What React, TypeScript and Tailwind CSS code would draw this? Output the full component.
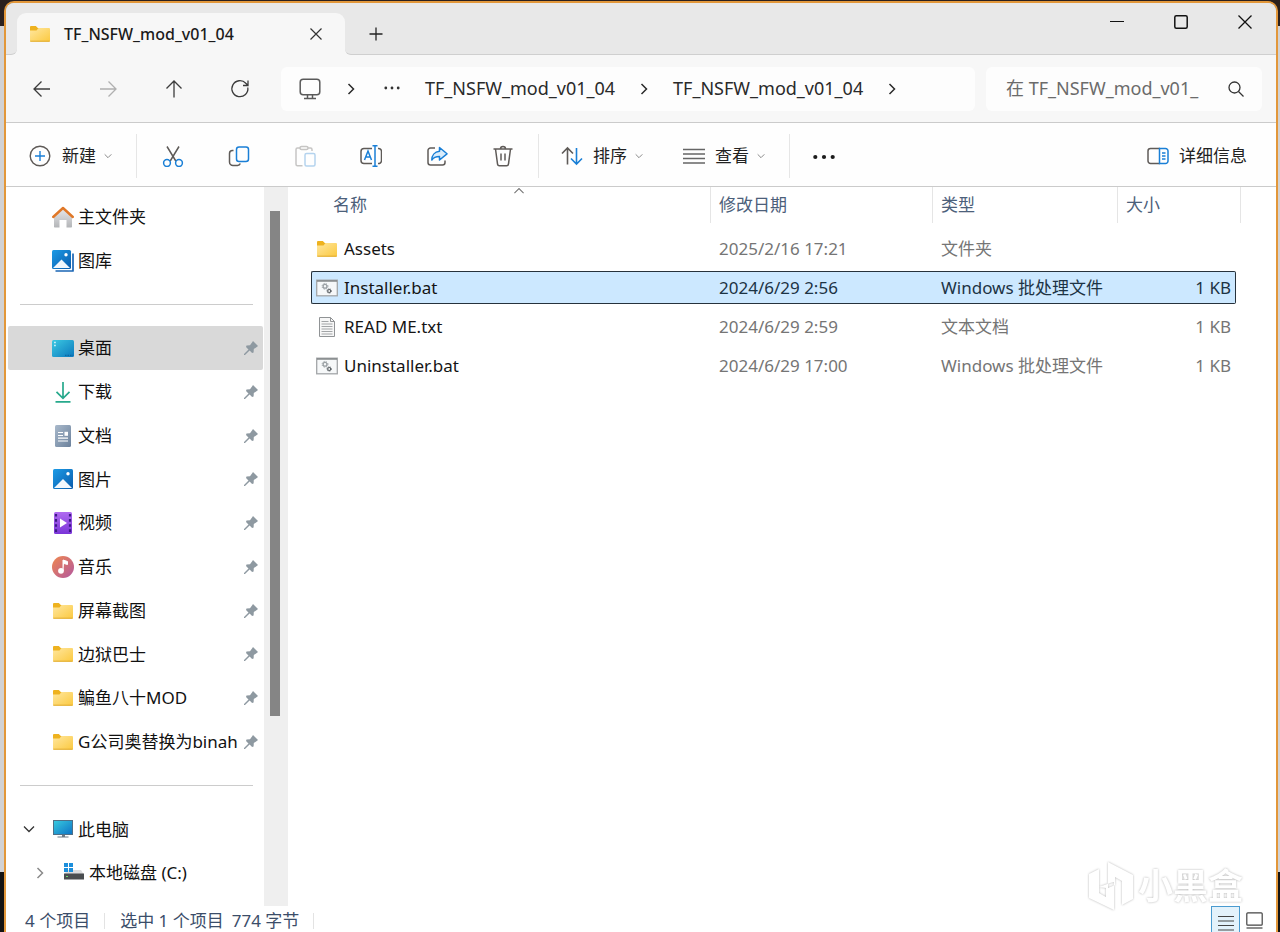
import type { ReactNode } from 'react';
import clsx from 'clsx';

interface IconProps {
  className?: string;
}

interface Place {
  name: string;
  icon: ReactNode;
  pinned?: boolean;
  selected?: boolean;
}

interface FileEntry {
  name: string;
  icon: ReactNode;
  modified: string;
  type: string;
  size: string;
  selected?: boolean;
}

function Chevron({ className = '' }: IconProps) {
  return (
    <svg viewBox="0 0 12 12" fill="none" stroke="currentColor" className={className}>
      <path d="M3.5 1 8.5 6l-5 5" strokeWidth="1.5" />
    </svg>
  );
}

function ChevronDown({ className = '' }: IconProps) {
  return (
    <svg viewBox="0 0 12 12" fill="none" stroke="currentColor" className={className}>
      <path d="m1 3.5 5 5 5-5" strokeWidth="1.3" />
    </svg>
  );
}

function FolderIcon() {
  return (
    <svg width="22" height="22" viewBox="0 0 22 22">
      <defs>
        <linearGradient id="folder" x1="0" y1="0" x2="1" y2="1">
          <stop offset="0" stopColor="#ffe7a0" />
          <stop offset="1" stopColor="#fbc93f" />
        </linearGradient>
      </defs>
      <path d="M1 4.2C1 3.500 1.500 3 2.200 3h4.600l2 2H20v4H1z" fill="#eeb21f" />
      <path d="M1 7.500h6.500l2-2.500h10.300c.700 0 1.200.5 1.200 1.200v11.600c0 .5-.4.900-.9.900H1.900c-.5 0-.9-.4-.9-.9z" fill="url(#folder)" />
      <path d="M1.300 18.200h19.400" stroke="#e0ab30" strokeWidth="1" />
    </svg>
  );
}

function HomeIcon() {
  return (
    <svg width="22" height="22" viewBox="0 0 22 22">
      <defs>
        <linearGradient id="wall" x1="0" y1="0" x2="0" y2="1">
          <stop offset="0" stopColor="#e8e8ea" />
          <stop offset="1" stopColor="#b3b5b8" />
        </linearGradient>
      </defs>
      <path d="M2 10 11 2.500 20 10v10.500c0 .6-.4 1-1 1h-4.500V14h-7v7.500H3c-.6 0-1-.4-1-1z" fill="url(#wall)" />
      <path d="M1.200 11 11 2l9.800 9" fill="none" stroke="#e07828" strokeWidth="2.400" strokeLinecap="round" strokeLinejoin="round" />
    </svg>
  );
}

function PictureShape({ size }: { size: number }) {
  return (
    <>
      <defs>
        <linearGradient id="pic" x1="0" y1="0" x2="1" y2="1">
          <stop offset="0" stopColor="#1c9be6" />
          <stop offset="1" stopColor="#0a5cad" />
        </linearGradient>
      </defs>
      <rect width={size} height={size} rx="1.500" fill="url(#pic)" />
      <path d={`M1 ${size - 1} L${size / 2} ${size / 2} L${size - 1} ${size - 1}Z`} fill="#f2f8fd" />
      <circle cx={size - 5} cy="4.800" r="1.700" fill="#fff" />
    </>
  );
}

function GalleryIcon() {
  return (
    <svg width="22" height="22" viewBox="0 0 22 22">
      <path d="M21 3.500v17.500H3.500" fill="none" stroke="#1a66b5" strokeWidth="1.700" strokeLinejoin="round" />
      <PictureShape size={19} />
    </svg>
  );
}

function PicturesIcon() {
  return (
    <svg width="22" height="22" viewBox="-1 -1 22 22">
      <PictureShape size={20} />
    </svg>
  );
}

function DesktopIcon() {
  return (
    <svg width="22" height="22" viewBox="0 0 22 22">
      <defs>
        <linearGradient id="desk" x1="0" y1="0" x2="1" y2="1">
          <stop offset="0" stopColor="#3cc9e2" />
          <stop offset="1" stopColor="#0b78bd" />
        </linearGradient>
      </defs>
      <rect y="3" width="22" height="17" rx="1.500" fill="url(#desk)" />
      <path d="M2.200 5.500h1.500M2.200 8.500h1.500" stroke="#e6fbff" strokeWidth="1.400" />
      <path d="M13 18.300h8" stroke="#0a5f9b" strokeWidth="1" strokeDasharray="1.500 1" />
    </svg>
  );
}

function DownloadIcon() {
  return (
    <svg width="22" height="22" viewBox="0 0 22 22" fill="none" stroke="#27a98c" strokeWidth="1.700">
      <path d="M11 1v16M4.500 10.800 11 17.300l6.500-6.500M3.500 20.800h15" />
    </svg>
  );
}

function DocumentsIcon() {
  return (
    <svg width="22" height="22" viewBox="0 0 22 22">
      <defs>
        <linearGradient id="docs" x1="0" y1="0" x2="1" y2="1">
          <stop offset="0" stopColor="#a9b9cb" />
          <stop offset="1" stopColor="#6b819c" />
        </linearGradient>
      </defs>
      <rect x="3" width="16" height="22" rx="1.500" fill="url(#docs)" />
      <path d="M6 7.500h5M6 10.500h5M6 13.200h10M6 16h10" stroke="#fff" strokeWidth="1.200" />
      <rect x="12.500" y="6.800" width="3.500" height="4" fill="#fff" />
    </svg>
  );
}

function VideosIcon() {
  return (
    <svg width="22" height="22" viewBox="0 0 22 22">
      <defs>
        <linearGradient id="video" x1="0" y1="0" x2="0" y2="1">
          <stop offset="0" stopColor="#b06af0" />
          <stop offset="1" stopColor="#7a35d8" />
        </linearGradient>
      </defs>
      <rect x="2" width="18" height="22" rx="1.500" fill="url(#video)" />
      <path d="M4 2v18M18 2v18" stroke="#3d1a86" strokeWidth="2.200" strokeDasharray="2.600 2.500" />
      <path d="m8 6.500 7 4.500-7 4.500z" fill="#fff" />
    </svg>
  );
}

function MusicIcon() {
  return (
    <svg width="22" height="22" viewBox="0 0 22 22">
      <defs>
        <linearGradient id="music" x1="0" y1="0" x2="1" y2="1">
          <stop offset="0" stopColor="#f0884e" />
          <stop offset="1" stopColor="#b257a0" />
        </linearGradient>
      </defs>
      <circle cx="11" cy="11" r="11" fill="url(#music)" />
      <circle cx="9" cy="14.800" r="2.900" fill="#fff" />
      <path d="M11 15V4l4.500 1.500v3L12 7.500" fill="#fff" stroke="#fff" strokeWidth="1" />
    </svg>
  );
}

function PcIcon() {
  return (
    <svg width="22" height="22" viewBox="0 0 22 22">
      <defs>
        <linearGradient id="pc" x1="0" y1="0" x2="1" y2="1">
          <stop offset="0" stopColor="#38cbe0" />
          <stop offset="1" stopColor="#0d72c4" />
        </linearGradient>
      </defs>
      <rect x="1.500" y="2.500" width="19" height="14" fill="url(#pc)" stroke="#4f6f86" strokeWidth="1" />
      <path d="M10 17h3v1.500h3.500v1h-11v-1H10z" fill="#6c7a85" />
    </svg>
  );
}

function DriveIcon() {
  return (
    <svg width="22" height="22" viewBox="0 0 22 22">
      <path d="M1.500 12 4 8h14l2.500 4z" fill="#dcdddf" />
      <rect x="1" y="11.500" width="20" height="6" fill="#4a4d50" />
      <path d="M3 14.500h2" stroke="#6fd66f" strokeWidth="1.200" />
      <path d="M1 1h4v4H1zM6 1h4v4H6zM1 6h4v4H1zM6 6h4v4H6z" fill="#1c8fdc" />
    </svg>
  );
}

function BatIcon() {
  return (
    <svg width="22" height="22" viewBox="0 0 22 22" fill="none">
      <rect x=".7" y="3.200" width="20.600" height="15.600" fill="#f6f8f9" stroke="#a3a6a8" strokeWidth="1.300" />
      <path d="M1 4h20" stroke="#7d8183" strokeWidth="1.400" />
      <circle cx="9" cy="9.300" r="1.900" stroke="#9aa0a4" strokeWidth="1.300" />
      <circle cx="9" cy="9.300" r="2.900" stroke="#9aa0a4" strokeWidth="1" strokeDasharray="1.200 1.150" />
      <circle cx="13.200" cy="14" r="1.500" stroke="#5a6064" strokeWidth="1.200" />
      <circle cx="13.200" cy="14" r="2.300" stroke="#5a6064" strokeWidth=".8" strokeDasharray="1 1.050" />
    </svg>
  );
}

function TxtIcon() {
  return (
    <svg width="22" height="22" viewBox="0 0 22 22" fill="none" stroke="#909395">
      <path d="M3.500 1.500h11l4 4v15h-15z" fill="#f7f7f7" />
      <path d="M14.500 1.500v4h4" />
      <path d="M5.500 5.500h7M5.500 8h11M5.500 10.500h11M5.500 13h11M5.500 15.500h11M5.500 18h11" stroke="#a2a5a7" />
    </svg>
  );
}

function PinIcon() {
  return (
    <svg width="14" height="14" viewBox="0 0 14 14" fill="#8e99a1" className="shrink-0">
      <path d="M9 0 14 5l-1.200.900-3 2.200-.2 3.300-1.500.6-2.500-2.500L1 14H0v-1l4.500-4.500L2 6l.5-1.500 3.500-.2L8.200 1.200z" />
    </svg>
  );
}

const navButtons = [
  { label: '后退', path: 'M18 10H2.500M9.500 2.500 2 10l7.500 7.500' },
  { label: '前进', path: 'M2 10h15.500M10.500 2.500 18 10l-7.500 7.500', disabled: true },
  { label: '向上', path: 'M10 18.500V2.500M2.500 9.500 10 2l7.500 7.500' },
  { label: '刷新', path: 'M17.800 8.500a8 8 0 1 1-2-4.200l2 2M18 1.500v5h-5' },
];

const INK = '#5f5b58';
const BLUE = '#1a7fd6';

const tools = [
  {
    label: '剪切',
    icon: (
      <>
        <path d="M5 1.500 13.800 16M17 1.500 8.200 16" stroke={INK} />
        <circle cx="5" cy="18" r="3.400" stroke={BLUE} />
        <circle cx="17" cy="18" r="3.400" stroke={BLUE} />
      </>
    ),
  },
  {
    label: '复制',
    icon: (
      <>
        <path d="M5.500 5.500h-1a3 3 0 0 0-3 3V17a3.500 3.500 0 0 0 3.500 3.500h4.500a3 3 0 0 0 2.800-2" stroke={INK} />
        <rect x="8.500" y="2" width="12" height="14.500" rx="2.500" stroke={BLUE} />
      </>
    ),
  },
  {
    label: '粘贴',
    icon: (
      <>
        <path d="M8.500 20.800H3.500a1.500 1.500 0 0 1-1.500-1.500V4.500A1.500 1.500 0 0 1 3.500 3H6M14 3h2.500A1.500 1.500 0 0 1 18 4.500V6" stroke="#c6c5c4" />
        <rect x="6" y="1.500" width="8" height="3" rx="1.500" stroke="#c6c5c4" />
        <rect x="11" y="8.500" width="10" height="12.500" rx="1.500" stroke="#b4d3ee" />
      </>
    ),
  },
  {
    label: '重命名',
    icon: (
      <>
        <path d="M12 3.500H4A3 3 0 0 0 1 6.500v9a3 3 0 0 0 3 3h8M18 3.500a3 3 0 0 1 3.500 3v9a3 3 0 0 1-3.500 3" stroke={INK} />
        <path d="m4.500 15 3.500-9 3.500 9M5.800 12h4.400M12.500.8h5M12.500 21.200h5M15 .8v20.400" stroke={BLUE} />
      </>
    ),
  },
  {
    label: '共享',
    icon: (
      <>
        <path d="M9 3H4.500A2.500 2.500 0 0 0 2 5.500v12A2.500 2.500 0 0 0 4.500 20h12a2.500 2.500 0 0 0 2.500-2.500V15.500" stroke={INK} />
        <path d="M13.500 2.500 21 8.800l-7.500 6.200v-3.500c-3.500 0-6 .8-7.700 3.500 0-4.500 2.700-8.200 7.700-8.700z" stroke={BLUE} fill="#d9ecfb" strokeLinejoin="round" />
      </>
    ),
  },
  {
    label: '删除',
    icon: (
      <path d="M1.500 4h19M3.500 4l2 14.800A2 2 0 0 0 7.500 20.700h7a2 2 0 0 0 2-1.900L18.500 4M8.500 4a2.500 2.500 0 0 1 5 0M9 8.500v7M13 8.500v7" stroke={INK} />
    ),
  },
];

const places: (Place | null)[] = [
  { name: '主文件夹', icon: <HomeIcon /> },
  { name: '图库', icon: <GalleryIcon /> },
  null,
  { name: '桌面', icon: <DesktopIcon />, pinned: true, selected: true },
  { name: '下载', icon: <DownloadIcon />, pinned: true },
  { name: '文档', icon: <DocumentsIcon />, pinned: true },
  { name: '图片', icon: <PicturesIcon />, pinned: true },
  { name: '视频', icon: <VideosIcon />, pinned: true },
  { name: '音乐', icon: <MusicIcon />, pinned: true },
  { name: '屏幕截图', icon: <FolderIcon />, pinned: true },
  { name: '边狱巴士', icon: <FolderIcon />, pinned: true },
  { name: '鳊鱼八十MOD', icon: <FolderIcon />, pinned: true },
  { name: 'G公司奥替换为binah', icon: <FolderIcon />, pinned: true },
  null,
];

const files: FileEntry[] = [
  { name: 'Assets', icon: <FolderIcon />, modified: '2025/2/16 17:21', type: '文件夹', size: '' },
  { name: 'Installer.bat', icon: <BatIcon />, modified: '2024/6/29 2:56', type: 'Windows 批处理文件', size: '1 KB', selected: true },
  { name: 'READ ME.txt', icon: <TxtIcon />, modified: '2024/6/29 2:59', type: '文本文档', size: '1 KB' },
  { name: 'Uninstaller.bat', icon: <BatIcon />, modified: '2024/6/29 17:00', type: 'Windows 批处理文件', size: '1 KB' },
];

function TitleBar() {
  return (
    <header className="flex h-[52px] shrink-0 bg-[linear-gradient(#e8e8e8_44px,#f7f7f7_44px)]">
      <div className="w-[11px] rounded-br-md border-b border-[#cfcfcf] bg-[#e8e8e8]" />
      <div className="flex w-[328px] bg-[linear-gradient(#e8e8e8_44px,#f7f7f7_44px)] pt-[10px]">
        <div className="flex flex-1 items-center rounded-t-[9px] bg-[#f7f7f7] pr-[22px] pl-[12px]">
          <FolderIcon />
          <span className="ml-[13px] flex-1 text-[16px] font-medium whitespace-nowrap text-[#1b1b1b]">TF_NSFW_mod_v01_04</span>
          <button aria-label="关闭标签页">
            <svg width="14" height="14" viewBox="0 0 14 14" fill="none" stroke="#333" strokeWidth="1.200">
              <path d="m1.500 1.500 11 11m0-11-11 11" />
            </svg>
          </button>
        </div>
      </div>
      <div className="flex flex-1 justify-between rounded-bl-md border-b border-[#cfcfcf] bg-[#e8e8e8] pr-6 pl-6">
        <button aria-label="新建标签页" className="pt-[10px]">
          <svg width="14" height="14" viewBox="0 0 14 14" fill="none" stroke="#222" strokeWidth="1.300">
            <path d="M7 .5v13M.5 7h13" />
          </svg>
        </button>
        <div className="flex h-[37px] items-center gap-[50px]">
          <button aria-label="最小化">
            <svg width="14" height="14" viewBox="0 0 14 14" fill="none" stroke="#111">
              <path d="M0 6.500h14" strokeWidth="1.200" />
            </svg>
          </button>
          <button aria-label="最大化">
            <svg width="14" height="14" viewBox="0 0 14 14" fill="none" stroke="#111">
              <rect x=".8" y=".8" width="12.400" height="12.400" rx="1.500" strokeWidth="1.500" />
            </svg>
          </button>
          <button aria-label="关闭">
            <svg width="14" height="14" viewBox="0 0 14 14" fill="none" stroke="#111">
              <path d="m.5.5 13 13m0-13-13 13" strokeWidth="1.300" />
            </svg>
          </button>
        </div>
      </div>
    </header>
  );
}

function AddressRow() {
  return (
    <div className="flex h-[68px] shrink-0 items-center border-b border-[#cbcbcb] bg-[#f7f7f7] pr-[14px] pl-[26px]">
      <nav className="flex w-[249px] gap-[46px]">
        {navButtons.map(({ label, path, disabled }) => (
          <button key={label} aria-label={label} disabled={disabled} className="text-[#3c3c3c] disabled:text-[#b0b0b0]">
            <svg width="20" height="20" viewBox="0 0 20 20" fill="none" stroke="currentColor" strokeWidth="1.300">
              <path d={path} />
            </svg>
          </button>
        ))}
      </nav>
      <div className="flex h-11 flex-1 items-center rounded-md bg-[#fdfdfd] pl-[18px] text-[18px] text-[#2a2a2a]">
        <svg width="22" height="22" viewBox="0 0 22 22" fill="none" stroke="#5a5a5a" strokeWidth="1.500">
          <rect x="1.200" y="1.200" width="19.600" height="15.600" rx="3" />
          <path d="M8.500 17v3.500M13.500 17v3.500M5 20.600h12" />
        </svg>
        <Chevron className="ml-6 size-3" />
        <svg width="16" height="16" viewBox="0 0 16 16" fill="#333" className="ml-[27px]">
          <circle cx="1.800" cy="7" r="1.400" />
          <circle cx="8" cy="7" r="1.400" />
          <circle cx="14.200" cy="7" r="1.400" />
        </svg>
        <a href="#parent" className="ml-[25px]">TF_NSFW_mod_v01_04</a>
        <Chevron className="mx-[23px] size-3" />
        <a href="#current">TF_NSFW_mod_v01_04</a>
        <Chevron className="ml-[23px] size-3" />
      </div>
      <label className="ml-[11px] flex h-11 w-[276px] items-center rounded-md bg-[#fdfdfd] pr-[17px] pl-5">
        <input
          type="text"
          aria-label="搜索"
          placeholder="在 TF_NSFW_mod_v01_"
          className="w-[200px] min-w-0 bg-transparent text-[18px] outline-none placeholder:text-[#6b6b6b]"
        />
        <svg width="18" height="18" viewBox="0 0 18 18" fill="none" stroke="#333" strokeWidth="1.300" className="ml-auto">
          <circle cx="7.500" cy="7.500" r="5.500" />
          <path d="m11.500 11.500 5 5" />
        </svg>
      </label>
    </div>
  );
}

function Toolbar() {
  return (
    <div className="flex h-16 shrink-0 items-center border-b border-[#cbcbcb] bg-[#fefefe] pt-[2px] pr-[29px] pl-[23px] text-[17px] text-[#222]">
      <button className="flex items-center">
        <svg width="22" height="22" viewBox="0 0 22 22" fill="none" strokeWidth="1.400">
          <circle cx="11" cy="11" r="9.800" stroke={INK} />
          <path d="M11 6v10M6 11h10" stroke={BLUE} />
        </svg>
        <span className="ml-[11px]">新建</span>
        <ChevronDown className="ml-2 size-2 text-[#777]" />
      </button>
      <div className="ml-6 h-11 w-px bg-[#e6e6e6]" />
      <div className="ml-[25px] flex gap-11">
        {tools.map(({ label, icon }) => (
          <button key={label} aria-label={label}>
            <svg width="22" height="22" viewBox="0 0 22 22" fill="none" strokeWidth="1.500">
              {icon}
            </svg>
          </button>
        ))}
      </div>
      <div className="ml-6 h-11 w-px bg-[#e6e6e6]" />
      <button className="ml-[22px] flex items-center">
        <svg width="22" height="22" viewBox="0 0 22 22" fill="none" strokeWidth="1.600">
          <path d="M6.500 19.500V3M1 8.500 6.500 3 12 8.500" stroke={INK} />
          <path d="M15.500 3v16M10 13.500l5.500 5.500 5.500-5.500" stroke={BLUE} />
        </svg>
        <span className="ml-[10px]">排序</span>
        <ChevronDown className="ml-2 size-2 text-[#777]" />
      </button>
      <button className="ml-10 flex items-center">
        <svg width="22" height="22" viewBox="0 0 22 22" fill="none" stroke="#666" strokeWidth="1.300">
          <path d="M0 4.500h22M0 9h22M0 13.500h22M0 18h22" />
        </svg>
        <span className="ml-[10px]">查看</span>
        <ChevronDown className="ml-2 size-2 text-[#777]" />
      </button>
      <div className="ml-6 h-11 w-px bg-[#e6e6e6]" />
      <button aria-label="更多" className="ml-[23px]">
        <svg width="22" height="22" viewBox="0 0 22 22" fill="#1c1c1c">
          <circle cx="2.300" cy="12" r="2.100" />
          <circle cx="11" cy="12" r="2.100" />
          <circle cx="19.700" cy="12" r="2.100" />
        </svg>
      </button>
      <button className="ml-auto flex items-center">
        <svg width="22" height="22" viewBox="0 0 22 22" fill="none" strokeWidth="1.500">
          <path d="M13 3.500H3.500a2.500 2.500 0 0 0-2.500 2.500v10a2.500 2.500 0 0 0 2.500 2.500H13" stroke={INK} />
          <path d="M12.500 3.500h6a2.500 2.500 0 0 1 2.500 2.500v10a2.500 2.500 0 0 1-2.500 2.500h-6zM15 8h3.500M15 11h3.500M15 14h3.500" stroke={BLUE} />
        </svg>
        <span className="ml-[10px]">详细信息</span>
      </button>
    </div>
  );
}

function Sidebar() {
  return (
    <aside className="flex w-[282px] shrink-0 bg-white">
      <ul className="grid flex-1 auto-rows-fr pt-2 pr-px pb-[11px] pl-[2px] text-[17px] text-[#111]">
        {places.map((place, index) =>
          place ? (
            <li key={place.name}>
              <a
                href="#place"
                className={clsx(
                  'flex h-full items-center rounded-xs pr-[5px] pl-11',
                  place.selected && 'bg-[#d9d9d9]',
                )}
              >
                {place.icon}
                <span className="ml-1 w-0 flex-1 whitespace-nowrap">{place.name}</span>
                {place.pinned && <PinIcon />}
              </a>
            </li>
          ) : (
            <li key={index} className="flex items-center pr-[10px] pl-3">
              <hr className="flex-1 border-[#cccccc]" />
            </li>
          ),
        )}
        <li className="flex items-center pl-[15px]">
          <ChevronDown className="size-3 text-[#333]" />
          <a href="#pc" className="ml-[17px] flex items-center gap-1">
            <PcIcon />
            此电脑
          </a>
        </li>
        <li className="flex items-center pl-[26px]">
          <Chevron className="size-3 text-[#8a8a8a]" />
          <a href="#c" className="ml-[17px] flex items-center gap-1">
            <DriveIcon />
            本地磁盘 (C:)
          </a>
        </li>
      </ul>
      <div className="flex w-6 flex-col bg-[#efefef] pt-6 pr-2 pl-[6px]">
        <div className="h-8/11 bg-[#858585]" />
      </div>
    </aside>
  );
}

function FileList() {
  const cell = 'flex h-[33px] items-center';
  const selectedCell = 'border-y border-[#26323c] bg-[#cce8ff] text-[#1c3344]';
  const head = 'flex h-9 items-center border-r border-[#e5e5e5]';

  return (
    <main className="flex-1 bg-white pr-10 pl-[23px]">
      <table className="w-full table-fixed border-collapse text-left text-[17px] text-[#757575]">
        <thead className="text-[#4c607a]">
          <tr className="h-[42px] align-top">
            <th className="relative p-0 font-normal">
              <div className={clsx(head, 'pl-[22px]')}>名称</div>
              <svg viewBox="0 0 12 12" fill="none" stroke="#777" className="absolute inset-x-0 -top-px left-[15px] mx-auto size-[10px]">
                <path d="m.5 8.500 5.500-5.500 5.500 5.500" strokeWidth="1.300" />
              </svg>
            </th>
            <th className="w-[222px] p-0 font-normal">
              <div className={clsx(head, 'pl-2')}>修改日期</div>
            </th>
            <th className="w-[185px] p-0 font-normal">
              <div className={clsx(head, 'pl-2')}>类型</div>
            </th>
            <th className="w-[118px] p-0 font-normal">
              <div className={clsx(head, '-mr-[5px] pl-2')}>大小</div>
            </th>
          </tr>
        </thead>
        <tbody>
          {files.map((file) => (
            <tr key={file.name}>
              <td className="px-0 py-[3px]">
                <div className={clsx(cell, file.selected ? 'rounded-l-xs border-l pl-1' : 'pl-[5px]', file.selected && selectedCell)}>
                  {file.icon}
                  <span className="ml-[6px] text-[#151515]">{file.name}</span>
                </div>
              </td>
              <td className="px-0 py-[3px]">
                <div className={clsx(cell, 'pl-2', file.selected && selectedCell)}>{file.modified}</div>
              </td>
              <td className="px-0 py-[3px]">
                <div className={clsx(cell, 'pl-2 whitespace-nowrap', file.selected && selectedCell)}>{file.type}</div>
              </td>
              <td className="px-0 py-[3px]">
                <div className={clsx(cell, 'justify-end', file.selected ? 'rounded-r-xs border-r pr-1' : 'pr-[5px]', file.selected && selectedCell)}>
                  {file.size}
                </div>
              </td>
            </tr>
          ))}
        </tbody>
      </table>
    </main>
  );
}

function Watermark() {
  return (
    <div className="pointer-events-none absolute right-[33px] bottom-[21px] flex items-center gap-1 text-white drop-shadow-[0_0_1px_#b5b5b5]">
      <svg width="46" height="50" viewBox="0 0 46 50" fill="#fff">
        <path d="M1 13 11 8v18l11-4 4-1v28L1 37zM11 26v6l7 4v-9zM20 1l25 13v24l-11 6V20l-7-4v8l-7 3z" fillRule="evenodd" />
      </svg>
      <span className="text-[35px] leading-10 font-bold">小黑盒</span>
    </div>
  );
}

function StatusBar() {
  return (
    <footer className="flex h-[26px] shrink-0 items-start bg-white pr-[13px] pl-[19px] text-[17px] text-[#3b4d69]">
      <span className="pt-[3px] leading-6 whitespace-nowrap">4 个项目</span>
      <span className="mt-[7px] ml-[14px] h-4 w-px bg-[#e3e3e3]" />
      <span className="ml-[15px] pt-[3px] leading-6 whitespace-nowrap">选中 1 个项目</span>
      <span className="ml-2 pt-[3px] leading-6 whitespace-nowrap">774 字节</span>
      <span className="mt-[7px] ml-[14px] h-4 w-px bg-[#e3e3e3]" />
      <button aria-label="详细信息视图" className="ml-auto flex h-full w-[29px] justify-center border border-b-0 border-[#4a9bd0] bg-[#e3f2fb] pt-[7px]">
        <svg width="18" height="18" viewBox="0 0 18 18" stroke="#444" strokeWidth="1.200">
          <path d="M1 2.500h16M1 7h16M1 11.500h16M1 16h16" />
        </svg>
      </button>
      <button aria-label="大图标视图" className="ml-[6px] pt-[6px]">
        <svg width="17" height="18" viewBox="0 0 17 18" fill="none" stroke="#444" strokeWidth="1.200">
          <rect x=".8" y=".8" width="15.400" height="12.400" rx="1" />
          <path d="M.5 16h16" />
        </svg>
      </button>
    </footer>
  );
}

export default function App() {
  return (
    <div className="h-screen min-h-[760px] overflow-hidden bg-[linear-gradient(#2a201e_26px,#d2d2d4_26px,#d2d2d4_872px,#141312_872px)] pt-px pr-[2px] pl-1 font-['Noto_Sans','Noto_Sans_CJK_SC',sans-serif]">
      <div className="relative flex h-full flex-col overflow-hidden rounded-t-[10px] border-2 border-b-0 border-[#e2973a]">
        <TitleBar />
        <AddressRow />
        <Toolbar />
        <div className="flex min-h-0 flex-1">
          <Sidebar />
          <FileList />
        </div>
        <StatusBar />
        <Watermark />
      </div>
    </div>
  );
}
